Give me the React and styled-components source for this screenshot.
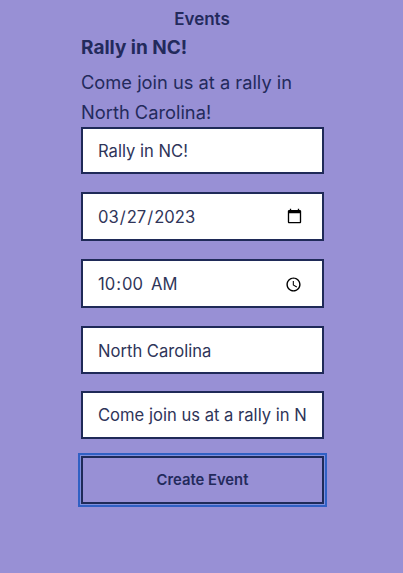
import React from "react";
import styled, { createGlobalStyle } from "styled-components";

const GlobalStyle = createGlobalStyle`
  html, body {
    margin: 0;
    padding: 0;
    background: #9890d5;
  }
  body {
    font-family: Inter, "Liberation Sans", sans-serif;
    color: #232a5c;
  }
`;

const Page = styled.div`
  width: 403px;
  height: 573px;
  overflow: hidden;
  display: flex;
  flex-direction: column;
  align-items: center;
  padding-top: 9px;
  box-sizing: border-box;
`;

const Title = styled.h1`
  margin: 0 0 0 1px;
  font-size: 17px;
  line-height: 20px;
  font-weight: 600;
`;

const Column = styled.div`
  width: 243px;
  margin-left: 2px;
  display: flex;
  flex-direction: column;
`;

const EventName = styled.h2`
  margin: 5px 0 0;
  font-size: 19px;
  line-height: 28px;
  font-weight: 700;
`;

const EventText = styled.p`
  margin: 5px 0 0;
  font-size: 18.3px;
  line-height: 30px;
  font-weight: 400;
`;

const Form = styled.form`
  display: flex;
  flex-direction: column;
  gap: 18px;
`;

const Field = styled.input`
  box-sizing: border-box;
  width: 243px;
  height: ${({ $h }) => $h}px;
  margin-top: ${({ $pull }) => ($pull ? "-1px" : "0")};
  border: 2px solid #1f2a58;
  border-radius: 0;
  background: #fff;
  padding: ${({ $pull }) => ($pull ? "0" : "1px")} 15px 0;
  font-family: inherit;
  font-size: 16.6px;
  color: #2f3559;
  outline: none;

  &[type="date"] {
    padding: 0 15px 0 14px;
  }

  &[type="time"] {
    padding: 2px 15px 0 14px;
  }

  &::-webkit-calendar-picker-indicator {
    margin-right: 2px;
  }

  &::-webkit-datetime-edit-ampm-field {
    margin-left: 3px;
  }
`;

const Submit = styled.button`
  box-sizing: border-box;
  width: 243px;
  height: 48px;
  margin-top: -1px;
  padding: 0 0 1px;
  border: 2px solid #1f2a58;
  border-radius: 0;
  background: transparent;
  font-family: inherit;
  font-size: 14.8px;
  font-weight: 600;
  color: #232a5c;
  outline: 2px solid #3060c4;
  outline-offset: 1px;
  box-shadow: 0 0 0 1px #7f8fdc;
`;

const App = () => {
  return (
    <Page>
      <GlobalStyle />
      <Title>Events</Title>
      <Column>
        <EventName>Rally in NC!</EventName>
        <EventText>Come join us at a rally in North Carolina!</EventText>
        <Form onSubmit={(e) => e.preventDefault()}>
          <Field $h={47} type="text" defaultValue="Rally in NC!" />
          <Field $h={49} type="date" defaultValue="2023-03-27" />
          <Field $h={49} type="time" defaultValue="10:00" />
          <Field $h={48} type="text" defaultValue="North Carolina" />
          <Field $h={48} $pull type="text" defaultValue="Come join us at a rally in North Carolina!" />
          <Submit type="submit">Create Event</Submit>
        </Form>
      </Column>
    </Page>
  );
};

export default App;
